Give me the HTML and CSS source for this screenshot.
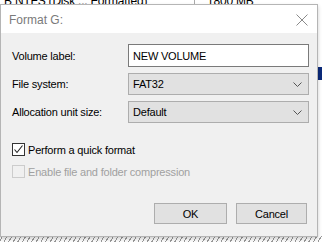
FILE: index.html
```html
<!DOCTYPE html>
<html>
<head>
<meta charset="utf-8">
<link rel="stylesheet" href="styles.css">
</head>
<body>
<div class="backdrop">
  <div class="bg-row">
    <span class="bg-name">B NTFS (Disk ... Formatted)</span>
    <span class="bg-sep"></span>
    <span class="bg-size">1800 MB</span>
  </div>
  <div class="bg-select"></div>
  <div class="bg-hatch"></div>
</div>
<div class="dialog">
  <div class="titlebar">
    <span class="title">Format G:</span>
    <svg class="close" width="12" height="12" viewBox="0 0 12 12"><path d="M0.5 0.5 L11.5 11.5 M11.5 0.5 L0.5 11.5" stroke="#8a8a8a" stroke-width="1" fill="none"/></svg>
  </div>
  <div class="body">
    <div class="form">
      <label class="lbl">Volume label:</label>
      <div class="input">NEW VOLUME</div>
      <label class="lbl">File system:</label>
      <div class="select"><span>FAT32</span><svg width="9" height="5" viewBox="0 0 9 5"><path d="M0.5 0.5 L4.5 4.5 L8.5 0.5" stroke="#555" fill="none"/></svg></div>
      <label class="lbl">Allocation unit size:</label>
      <div class="select"><span>Default</span><svg width="9" height="5" viewBox="0 0 9 5"><path d="M0.5 0.5 L4.5 4.5 L8.5 0.5" stroke="#555" fill="none"/></svg></div>
    </div>
    <div class="checks">
      <div class="check"><span class="box"><svg width="11" height="11" viewBox="0 0 11 11"><path d="M1.5 5.5 L4 8.5 L9.5 1.5" stroke="#222" stroke-width="1.1" fill="none"/></svg></span><span>Perform a quick format</span></div>
      <div class="check disabled"><span class="box"></span><span>Enable file and folder compression</span></div>
    </div>
    <div class="buttons">
      <div class="btn ok">OK</div>
      <div class="btn cancel">Cancel</div>
    </div>
  </div>
</div>
</body>
</html>
```
FILE: styles.css
```css
html, body {
  margin: 0;
  padding: 0;
}
body {
  width: 322px;
  height: 242px;
  background: #ffffff;
  position: relative;
  overflow: hidden;
  font-family: "Liberation Sans", Arial, sans-serif;
  font-size: 11px;
  letter-spacing: -0.2px;
  color: #000;
}
.backdrop {
  position: absolute;
  inset: 0;
}
.bg-row {
  display: flex;
  align-items: flex-end;
  height: 4px;
  overflow: hidden;
  font-size: 12px;
  line-height: 12px;
}
.bg-name {
  width: 190px;
  padding-left: 4px;
  margin-bottom: -3px;
}
.bg-sep {
  width: 1px;
  height: 4px;
  background: #aaa;
  margin-right: 12px;
}
.bg-size {
  margin-bottom: -3px;
}
.bg-select {
  position: absolute;
  left: 318px;
  top: 67px;
  width: 4px;
  height: 13px;
  background: #0b2a7a;
}
.bg-hatch {
  position: absolute;
  left: 0;
  top: 236px;
  width: 322px;
  height: 6px;
  background: repeating-linear-gradient(-60deg, #ffffff 0 3px, #9a9a9a 3px 4px);
}
.dialog {
  position: absolute;
  left: 0;
  top: 4px;
  width: 318px;
  height: 233px;
  box-sizing: border-box;
  border: 1px solid #b5b5b5;
  background: #f0f0f0;
  display: flex;
  flex-direction: column;
  box-shadow: 0 2px 4px rgba(0,0,0,0.2);
}
.titlebar {
  height: 28px;
  box-sizing: border-box;
  background: #ffffff;
  display: flex;
  align-items: center;
  justify-content: space-between;
  padding: 1px 9px 0 8px;
}
.title {
  font-size: 12px;
  color: #7a7a7a;
  letter-spacing: 0;
}
.close {
  display: block;
}
.body {
  flex: 1;
  padding: 11px 8px 0 11px;
  display: flex;
  flex-direction: column;
}
.form {
  display: grid;
  grid-template-columns: 116px 1fr;
  row-gap: 6px;
  align-items: center;
}
.input {
  height: 23px;
  box-sizing: border-box;
  border: 1px solid #7a7a7a;
  background: #fff;
  padding: 0 4px;
  display: flex;
  align-items: center;
}
.select {
  height: 22px;
  box-sizing: border-box;
  border: 1px solid #adadad;
  background: #e1e1e1;
  padding: 0 6px 0 4px;
  display: flex;
  align-items: center;
  justify-content: space-between;
}
.checks {
  margin-top: 20px;
  display: flex;
  flex-direction: column;
  gap: 9px;
}
.check {
  display: flex;
  align-items: center;
  gap: 3px;
}
.box {
  width: 13px;
  height: 13px;
  box-sizing: border-box;
  border: 1px solid #333;
  background: #fff;
  display: flex;
  align-items: center;
  justify-content: center;
}
.check.disabled {
  color: #a0a0a0;
}
.check.disabled .box {
  border-color: #cccccc;
  background: #f0f0f0;
}
.buttons {
  margin-top: 25px;
  display: flex;
  justify-content: flex-end;
  gap: 9px;
  padding-right: 2px;
}
.btn {
  height: 21px;
  box-sizing: border-box;
  border: 1px solid #adadad;
  background: #e1e1e1;
  display: flex;
  align-items: center;
  justify-content: center;
}
.ok {
  width: 73px;
}
.cancel {
  width: 71px;
}
```
